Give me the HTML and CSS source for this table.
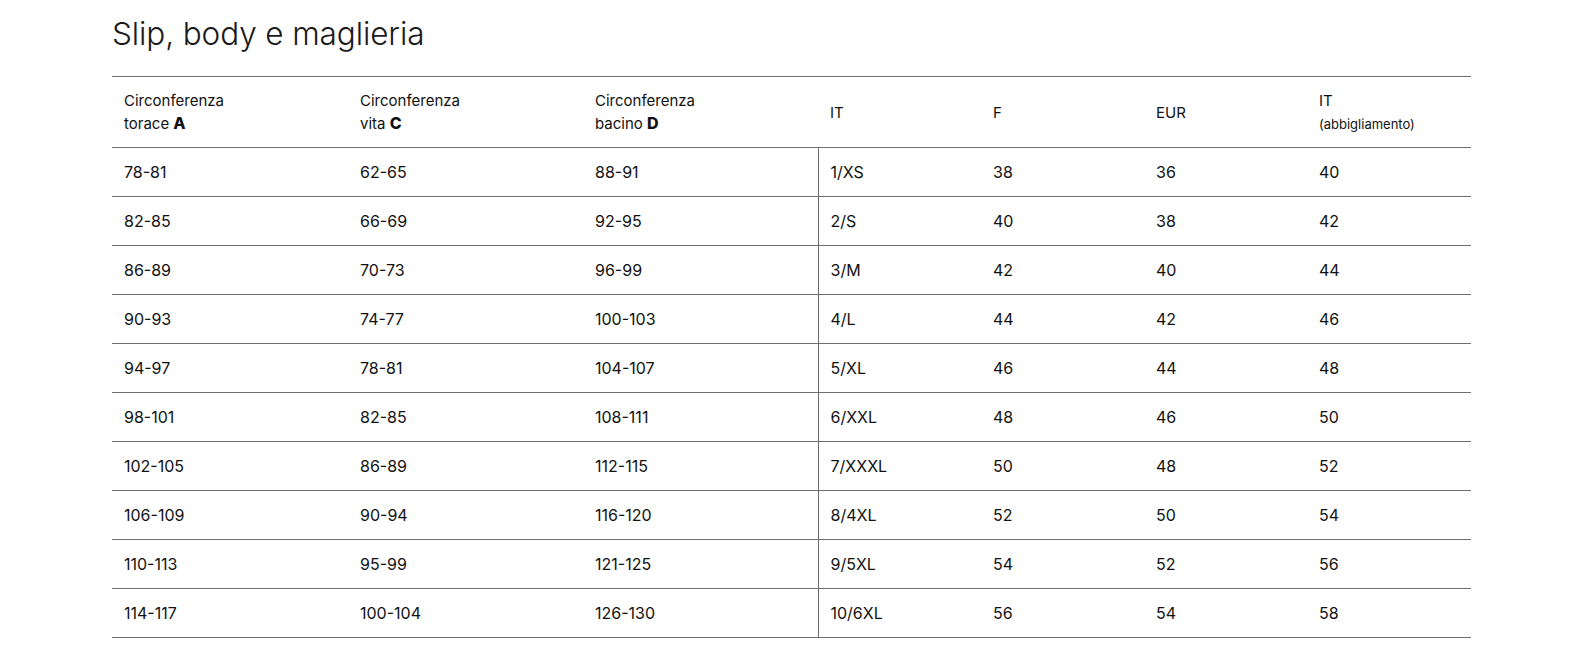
FILE: index.html
```html
<!DOCTYPE html>
<html lang="it">
<head>
<meta charset="utf-8">
<title>Slip, body e maglieria</title>
<link rel="stylesheet" href="styles.css">
</head>
<body>
<main class="page">
  <h1 class="title">Slip, body e maglieria</h1>
  <table class="sizes">
    <colgroup>
      <col class="c-first"><col class="c-wide"><col class="c-wide">
      <col class="c-narrow"><col class="c-narrow"><col class="c-narrow"><col class="c-last">
    </colgroup>
    <thead>
      <tr>
        <th>Circonferenza<br>torace <b>A</b></th>
        <th>Circonferenza<br>vita <b>C</b></th>
        <th>Circonferenza<br>bacino <b>D</b></th>
        <th>IT</th>
        <th>F</th>
        <th>EUR</th>
        <th>IT<br><span class="sub">(abbigliamento)</span></th>
      </tr>
    </thead>
    <tbody>
      <tr><td>78-81</td><td>62-65</td><td>88-91</td><td class="it">1/XS</td><td>38</td><td>36</td><td>40</td></tr>
      <tr><td>82-85</td><td>66-69</td><td>92-95</td><td class="it">2/S</td><td>40</td><td>38</td><td>42</td></tr>
      <tr><td>86-89</td><td>70-73</td><td>96-99</td><td class="it">3/M</td><td>42</td><td>40</td><td>44</td></tr>
      <tr><td>90-93</td><td>74-77</td><td>100-103</td><td class="it">4/L</td><td>44</td><td>42</td><td>46</td></tr>
      <tr><td>94-97</td><td>78-81</td><td>104-107</td><td class="it">5/XL</td><td>46</td><td>44</td><td>48</td></tr>
      <tr><td>98-101</td><td>82-85</td><td>108-111</td><td class="it">6/XXL</td><td>48</td><td>46</td><td>50</td></tr>
      <tr><td>102-105</td><td>86-89</td><td>112-115</td><td class="it">7/XXXL</td><td>50</td><td>48</td><td>52</td></tr>
      <tr><td>106-109</td><td>90-94</td><td>116-120</td><td class="it">8/4XL</td><td>52</td><td>50</td><td>54</td></tr>
      <tr><td>110-113</td><td>95-99</td><td>121-125</td><td class="it">9/5XL</td><td>54</td><td>52</td><td>56</td></tr>
      <tr><td>114-117</td><td>100-104</td><td>126-130</td><td class="it">10/6XL</td><td>56</td><td>54</td><td>58</td></tr>
    </tbody>
  </table>
</main>
</body>
</html>
```

FILE: styles.css
```css
html, body {
  margin: 0;
  padding: 0;
  background: #ffffff;
}

body {
  font-family: "Inter", "Noto Sans", "Liberation Sans", sans-serif;
  color: #111111;
}

.page {
  padding: 13px 0 0 112px;
  width: 1359px;
}

.title {
  margin: 0 0 21px 0;
  font-family: "Inter", "Lato", sans-serif;
  font-weight: 300;
  font-size: 31.5px;
  line-height: 42px;
  color: #1a1a1a;
  letter-spacing: -0.1px;
}

.sizes {
  width: 1359px;
  border-collapse: collapse;
  table-layout: fixed;
  border-top: 1px solid #6e6e6e;
}

.c-first { width: 236px; }
.c-wide { width: 235px; }
.c-narrow { width: 163px; }
.c-last { width: 164px; }

.sizes th {
  height: 70px;
  padding: 0 12px;
  text-align: left;
  vertical-align: middle;
  font-weight: 400;
  font-size: 15px;
  line-height: 23px;
  color: #111;
  border-bottom: 1px solid #6e6e6e;
}

.sizes th b {
  font-weight: 800;
  font-size: 16px;
}

.sizes th .sub {
  font-size: 13px;
}

.sizes td {
  height: 48px;
  padding: 0 12px;
  text-align: left;
  vertical-align: middle;
  font-size: 16px;
  line-height: 20px;
  color: #111;
  border-bottom: 1px solid #6e6e6e;
}

.sizes td.it {
  border-left: 1px solid #6e6e6e;
}
```
